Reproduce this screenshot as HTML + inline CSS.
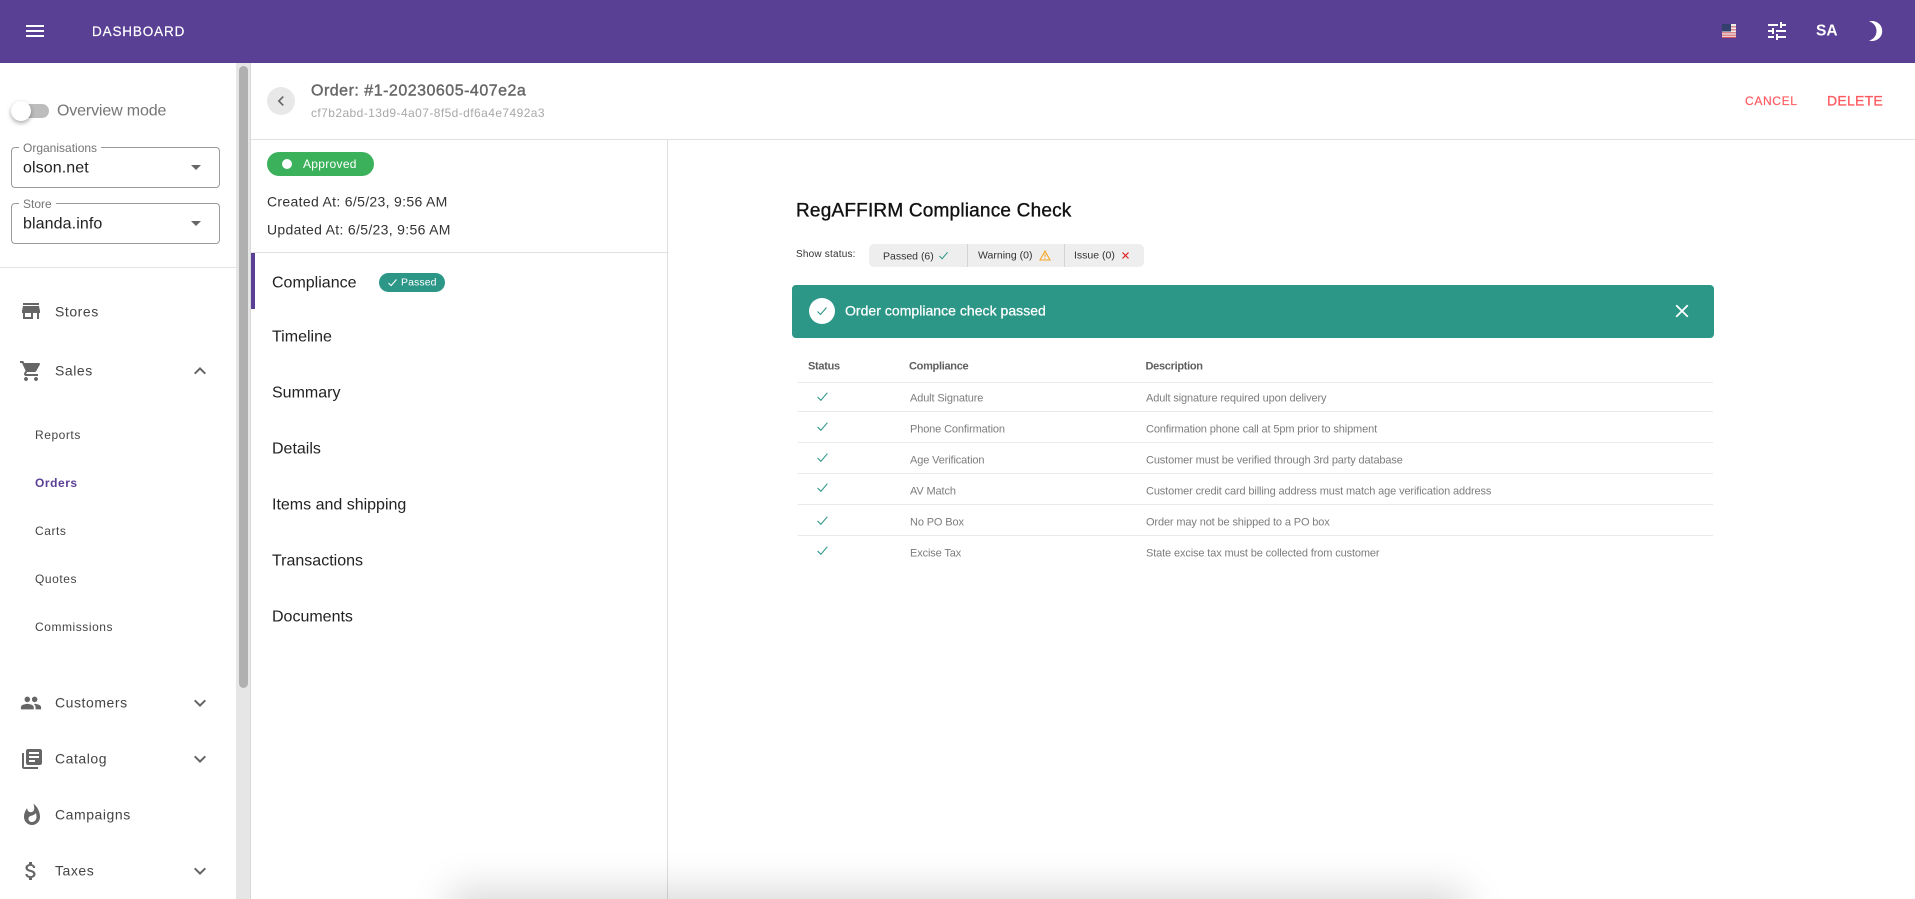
<!DOCTYPE html>
<html>
<head>
<meta charset="utf-8">
<style>
html,body{margin:0;padding:0;width:1915px;height:899px;overflow:hidden;background:#fff;font-family:"Liberation Sans",sans-serif;}
#root{position:relative;width:1915px;height:899px;overflow:hidden;}
.a{position:absolute;}
.t{position:absolute;white-space:nowrap;transform:translateY(-50%);line-height:1.2;}
svg{position:absolute;display:block;}
.side{font-size:14px;color:#444;letter-spacing:.55px;left:55px;}
.sub{font-size:12px;color:#444;letter-spacing:.55px;}
.menu{font-size:16px;color:#222;left:272px;}
.cell{font-size:11px;color:#7d7d7d;letter-spacing:-.13px;}
.th{font-size:11px;color:#5f5f5f;font-weight:bold;letter-spacing:-.3px;}
.line{position:absolute;left:798px;width:915px;height:1px;background:#e9e9e9;}
</style>
</head>
<body>
<div id="root">
<!-- header -->
<div class="a" style="left:0;top:0;width:1915px;height:63px;background:#5a4095;"></div>
<svg style="left:23px;top:19px" width="24" height="24" viewBox="0 0 24 24"><path fill="#fff" d="M3 18h18v-2H3v2zm0-5h18v-2H3v2zm0-7v2h18V6H3z"/></svg>
<div class="t" style="left:92px;top:31.5px;font-size:13.5px;color:#fff;letter-spacing:.85px;-webkit-text-stroke:.2px #fff;">DASHBOARD</div>
<svg style="left:1722px;top:24px" width="14" height="14" viewBox="0 0 14 14"><rect width="14" height="14" fill="#eee"/><rect y="2" width="14" height="1.5" fill="#d9878d"/><rect y="5" width="14" height="1.5" fill="#d9878d"/><rect y="8" width="14" height="1.5" fill="#d9878d"/><rect y="10.5" width="14" height="1.5" fill="#d9878d"/><rect y="12.8" width="14" height="1.2" fill="#d9505a"/><rect width="9" height="7.5" fill="#33406e"/></svg>
<svg style="left:1765px;top:19px" width="24" height="24" viewBox="0 0 24 24"><path fill="#fff" d="M3 17v2h6v-2H3zM3 5v2h10V5H3zm10 16v-2h8v-2h-8v-2h-2v6h2zM7 9v2H3v2h4v2h2V9H7zm14 4v-2H11v2h10zm-6-4h2V7h4V5h-4V3h-2v6z"/></svg>
<div class="t" style="left:1816px;top:32px;font-size:15.5px;font-weight:bold;color:#fff;">SA</div>
<svg style="left:1865px;top:18px" width="22" height="26" viewBox="0 0 22 26"><path fill="#fff" d="M4 3.2C11 2 17.2 6 17.2 13S11 24 4 22.8C9 21 11.5 17.5 11.5 13S9 5 4 3.2z"/></svg>

<!-- sidebar -->
<div class="a" style="left:236px;top:63px;width:14px;height:836px;background:#e6e6e6;"></div>
<div class="a" style="left:250px;top:63px;width:1px;height:836px;background:#d8d8d8;"></div>
<div class="a" style="left:239px;top:66px;width:9px;height:622px;background:#b0b0b0;border-radius:5px;"></div>

<div class="a" style="left:17px;top:104px;width:32px;height:14px;background:#bdbdbd;border-radius:7px;"></div>
<div class="a" style="left:11px;top:101px;width:20px;height:20px;background:#fff;border-radius:50%;box-shadow:0 2px 5px rgba(0,0,0,.35);"></div>
<div class="t" style="left:57px;top:110.5px;font-size:16px;color:#757575;letter-spacing:-.15px;">Overview mode</div>

<div class="a" style="left:11px;top:147px;width:207px;height:38.5px;border:1px solid #9a9a9a;border-radius:4px;"></div>
<div class="t" style="left:19px;top:148px;font-size:12px;color:#757575;background:#fff;padding:0 4px;">Organisations</div>
<div class="t" style="left:23px;top:167.5px;font-size:16px;color:#222;letter-spacing:.1px;">olson.net</div>
<div class="a" style="left:191px;top:165px;width:0;height:0;border-left:5px solid transparent;border-right:5px solid transparent;border-top:5px solid #666;"></div>

<div class="a" style="left:11px;top:203px;width:207px;height:38.5px;border:1px solid #9a9a9a;border-radius:4px;"></div>
<div class="t" style="left:19px;top:204px;font-size:12px;color:#757575;background:#fff;padding:0 4px;">Store</div>
<div class="t" style="left:23px;top:223.5px;font-size:16px;color:#222;letter-spacing:.1px;">blanda.info</div>
<div class="a" style="left:191px;top:221px;width:0;height:0;border-left:5px solid transparent;border-right:5px solid transparent;border-top:5px solid #666;"></div>

<div class="a" style="left:0;top:267px;width:236px;height:1px;background:#e2e2e2;"></div>

<svg style="left:19px;top:299px" width="24" height="24" viewBox="0 0 24 24"><path fill="#666" d="M20 4H4v2h16V4zm1 10v-2l-1-5H4l-1 5v2h1v6h10v-6h4v6h2v-6h1zm-9 4H6v-4h6v4z"/></svg>
<div class="t side" style="top:311.5px;">Stores</div>
<svg style="left:19px;top:359px" width="24" height="24" viewBox="0 0 24 24"><path fill="#666" d="M7 18c-1.1 0-1.99.9-1.99 2S5.9 22 7 22s2-.9 2-2-.9-2-2-2zM1 2v2h2l3.6 7.59-1.35 2.45c-.16.28-.25.61-.25.96 0 1.1.9 2 2 2h12v-2H7.42c-.14 0-.25-.11-.25-.25l.03-.12.9-1.63h7.45c.75 0 1.41-.41 1.75-1.03l3.58-6.49c.08-.14.12-.31.12-.48 0-.55-.45-1-1-1H5.21l-.94-2H1zm16 16c-1.1 0-1.99.9-1.99 2s.89 2 1.99 2 2-.9 2-2-.9-2-2-2z"/></svg>
<div class="t side" style="top:371px;">Sales</div>
<svg style="left:188px;top:359px" width="24" height="24" viewBox="0 0 24 24"><path fill="#666" d="M12 8l-6 6 1.41 1.41L12 10.83l4.59 4.58L18 14z"/></svg>

<div class="t sub" style="left:35px;top:435px;">Reports</div>
<div class="t sub" style="left:35px;top:483px;color:#5a4095;font-weight:bold;">Orders</div>
<div class="t sub" style="left:35px;top:531px;">Carts</div>
<div class="t sub" style="left:35px;top:579px;">Quotes</div>
<div class="t sub" style="left:35px;top:627px;">Commissions</div>

<svg style="left:20px;top:692px" width="22" height="22" viewBox="0 0 24 24"><path fill="#666" d="M16 11c1.66 0 2.99-1.34 2.99-3S17.66 5 16 5c-1.66 0-3 1.34-3 3s1.34 3 3 3zm-8 0c1.66 0 2.99-1.34 2.99-3S9.66 5 8 5C6.34 5 5 6.34 5 8s1.34 3 3 3zm0 2c-2.33 0-7 1.17-7 3.5V19h14v-2.5c0-2.33-4.67-3.5-7-3.5zm8 0c-.29 0-.62.02-.97.05 1.16.84 1.97 1.97 1.97 3.45V19h6v-2.5c0-2.33-4.67-3.5-7-3.5z"/></svg>
<div class="t side" style="top:703px;">Customers</div>
<svg style="left:188px;top:691px" width="24" height="24" viewBox="0 0 24 24"><path fill="#666" d="M16.59 8.59L12 13.17 7.41 8.59 6 10l6 6 6-6z"/></svg>

<svg style="left:19.5px;top:747px" width="24" height="24" viewBox="0 0 24 24"><path fill="#666" d="M4 6H2v14c0 1.1.9 2 2 2h14v-2H4V6zm16-4H8c-1.1 0-2 .9-2 2v12c0 1.1.9 2 2 2h12c1.1 0 2-.9 2-2V4c0-1.1-.9-2-2-2zm-1 9H9V9h10v2zm-4 4H9v-2h6v2zm4-8H9V5h10v2z"/></svg>
<div class="t side" style="top:759px;">Catalog</div>
<svg style="left:188px;top:747px" width="24" height="24" viewBox="0 0 24 24"><path fill="#666" d="M16.59 8.59L12 13.17 7.41 8.59 6 10l6 6 6-6z"/></svg>

<svg style="left:19.5px;top:803px" width="24" height="24" viewBox="0 0 24 24"><path fill="#666" d="M13.5.67s.74 2.65.74 4.8c0 2.06-1.35 3.73-3.41 3.73-2.07 0-3.63-1.67-3.63-3.73l.03-.36C5.21 7.51 4 10.62 4 14c0 4.42 3.58 8 8 8s8-3.58 8-8C20 8.61 17.41 3.8 13.5.67zM11.71 19c-1.78 0-3.22-1.4-3.22-3.14 0-1.62 1.05-2.76 2.81-3.12 1.77-.36 3.6-1.21 4.62-2.58.39 1.29.59 2.65.59 4.04 0 2.65-2.15 4.8-4.8 4.8z"/></svg>
<div class="t side" style="top:815px;">Campaigns</div>

<svg style="left:19px;top:859px" width="24" height="24" viewBox="0 0 24 24"><path fill="#666" d="M11.8 10.9c-2.27-.59-3-1.2-3-2.15 0-1.09 1.01-1.85 2.7-1.85 1.78 0 2.44.85 2.5 2.1h2.21c-.07-1.72-1.12-3.3-3.21-3.81V3h-3v2.16c-1.94.42-3.5 1.68-3.5 3.61 0 2.31 1.91 3.46 4.7 4.13 2.5.6 3 1.48 3 2.41 0 .69-.49 1.79-2.7 1.79-2.06 0-2.87-.92-2.98-2.1h-2.2c.12 2.19 1.76 3.42 3.68 3.83V21h3v-2.15c1.95-.37 3.5-1.5 3.5-3.55 0-2.84-2.43-3.81-4.7-4.4z"/></svg>
<div class="t side" style="top:871px;">Taxes</div>
<svg style="left:188px;top:859px" width="24" height="24" viewBox="0 0 24 24"><path fill="#666" d="M16.59 8.59L12 13.17 7.41 8.59 6 10l6 6 6-6z"/></svg>

<!-- order header -->
<div class="a" style="left:267px;top:87px;width:28px;height:28px;background:#e8e8e8;border-radius:50%;"></div>
<svg style="left:271px;top:91px" width="20" height="20" viewBox="0 0 24 24"><path fill="#666" d="M15.41 7.41L14 6l-6 6 6 6 1.41-1.41L10.83 12z"/></svg>
<div class="t" style="left:311px;top:91px;font-size:16px;color:#666;letter-spacing:.5px;-webkit-text-stroke:.4px #666;">Order: #1-20230605-407e2a</div>
<div class="t" style="left:311px;top:113px;font-size:12px;color:#a8a8a8;letter-spacing:.42px;">cf7b2abd-13d9-4a07-8f5d-df6a4e7492a3</div>
<div class="t" style="left:1745px;top:101px;font-size:12px;color:#ff5a60;letter-spacing:.65px;-webkit-text-stroke:.2px #ff5a60;">CANCEL</div>
<div class="t" style="left:1827px;top:101px;font-size:14px;color:#ff5a60;letter-spacing:.25px;-webkit-text-stroke:.3px #ff5a60;">DELETE</div>
<div class="a" style="left:251px;top:139px;width:1664px;height:1px;background:#e0e0e0;"></div>

<!-- left panel -->
<div class="a" style="left:667px;top:140px;width:1px;height:759px;background:#dedede;"></div>
<div class="a" style="left:267px;top:152px;width:107px;height:24px;background:#3cb15c;border-radius:12px;"></div>
<div class="a" style="left:282px;top:159px;width:10px;height:10px;background:#fff;border-radius:50%;"></div>
<div class="t" style="left:303px;top:163.5px;font-size:12px;color:#fff;letter-spacing:.3px;">Approved</div>
<div class="t" style="left:267px;top:202px;font-size:14px;color:#333;letter-spacing:.32px;">Created At: 6/5/23, 9:56 AM</div>
<div class="t" style="left:267px;top:230px;font-size:14px;color:#333;letter-spacing:.32px;">Updated At: 6/5/23, 9:56 AM</div>
<div class="a" style="left:251px;top:252px;width:416px;height:1px;background:#e0e0e0;"></div>
<div class="a" style="left:251px;top:253px;width:4px;height:56px;background:#5a4095;"></div>
<div class="t menu" style="top:283px;">Compliance</div>
<div class="a" style="left:379px;top:273px;width:66px;height:19px;background:#2c9687;border-radius:10px;"></div>
<svg style="left:386px;top:276px" width="13" height="13" viewBox="0 0 13 13"><path d="M2.5 7l2.6 2.6L10.5 3.5" fill="none" stroke="#fff" stroke-width="1.1"/></svg>
<div class="t" style="left:401px;top:283px;font-size:10.5px;color:#fff;letter-spacing:.1px;">Passed</div>
<div class="t menu" style="top:337px;">Timeline</div>
<div class="t menu" style="top:393px;">Summary</div>
<div class="t menu" style="top:449px;">Details</div>
<div class="t menu" style="top:505px;">Items and shipping</div>
<div class="t menu" style="top:561px;">Transactions</div>
<div class="t menu" style="top:617px;">Documents</div>

<!-- main -->
<div class="t" style="left:796px;top:212px;font-size:19px;color:#111;letter-spacing:.2px;-webkit-text-stroke:.35px #111;">RegAFFIRM Compliance Check</div>
<div class="t" style="left:796px;top:255px;font-size:10px;color:#333;letter-spacing:.2px;">Show status:</div>
<div class="a" style="left:869px;top:244px;width:275px;height:23px;background:#eee;border-radius:5px;"></div>
<div class="a" style="left:967px;top:244px;width:1px;height:23px;background:#d4d4d4;"></div>
<div class="a" style="left:1064px;top:244px;width:1px;height:23px;background:#d4d4d4;"></div>
<div class="t" style="left:883px;top:256.5px;font-size:10.5px;color:#333;">Passed (6)</div>
<svg style="left:938px;top:250px" width="11" height="11" viewBox="0 0 12 12"><path d="M1.5 6.5L4.5 9.5 10.5 2.5" fill="none" stroke="#2c9687" stroke-width="1.1"/></svg>
<div class="t" style="left:978px;top:256px;font-size:10.5px;color:#333;">Warning (0)</div>
<svg style="left:1039px;top:250px" width="12" height="11" viewBox="0 0 12 11"><path d="M6 1L11 10H1z M6 4v3 M6 8v1" fill="none" stroke="#f5a623" stroke-width="1.1"/></svg>
<div class="t" style="left:1074px;top:256px;font-size:10.5px;color:#333;">Issue (0)</div>
<svg style="left:1120.5px;top:251px" width="9" height="9" viewBox="0 0 9 9"><path d="M1.5 1.5L7.5 7.5M7.5 1.5L1.5 7.5" stroke="#e02020" stroke-width="1.2"/></svg>

<div class="a" style="left:792px;top:285px;width:921.5px;height:53px;background:#2c9687;border-radius:4px;"></div>
<div class="a" style="left:809px;top:298px;width:26px;height:26px;background:#fff;border-radius:50%;"></div>
<svg style="left:816px;top:305px" width="12" height="12" viewBox="0 0 12 12"><path d="M1.5 6.5L4.5 9.5 10.5 2.5" fill="none" stroke="#2c9687" stroke-width="1.1"/></svg>
<div class="t" style="left:845px;top:311px;font-size:14px;color:#fff;letter-spacing:.03px;-webkit-text-stroke:.25px #fff;">Order compliance check passed</div>
<svg style="left:1671px;top:300px" width="22" height="22" viewBox="0 0 24 24"><path fill="#fff" d="M19 6.41L17.59 5 12 10.59 6.41 5 5 6.41 10.59 12 5 17.59 6.41 19 12 13.41 17.59 19 19 17.59 13.41 12z"/></svg>

<!-- table -->
<div class="t th" style="left:808px;top:367px;">Status</div>
<div class="t th" style="left:909px;top:367px;">Compliance</div>
<div class="t th" style="left:1145.5px;top:367px;">Description</div>
<div class="line" style="top:382px;"></div>
<div class="line" style="top:411px;"></div>
<div class="line" style="top:442px;"></div>
<div class="line" style="top:473px;"></div>
<div class="line" style="top:504px;"></div>
<div class="line" style="top:535px;"></div>

<svg style="left:816px;top:390px" width="13" height="13" viewBox="0 0 12 12"><path d="M1.5 6.5L4.5 9.5 10.5 2.5" fill="none" stroke="#2c9687" stroke-width="1"/></svg>
<div class="t cell" style="left:910px;top:399px;">Adult Signature</div>
<div class="t cell" style="left:1146px;top:399px;">Adult signature required upon delivery</div>

<svg style="left:816px;top:420px" width="13" height="13" viewBox="0 0 12 12"><path d="M1.5 6.5L4.5 9.5 10.5 2.5" fill="none" stroke="#2c9687" stroke-width="1"/></svg>
<div class="t cell" style="left:910px;top:430px;">Phone Confirmation</div>
<div class="t cell" style="left:1146px;top:430px;">Confirmation phone call at 5pm prior to shipment</div>

<svg style="left:816px;top:451px" width="13" height="13" viewBox="0 0 12 12"><path d="M1.5 6.5L4.5 9.5 10.5 2.5" fill="none" stroke="#2c9687" stroke-width="1"/></svg>
<div class="t cell" style="left:910px;top:461px;">Age Verification</div>
<div class="t cell" style="left:1146px;top:461px;">Customer must be verified through 3rd party database</div>

<svg style="left:816px;top:481px" width="13" height="13" viewBox="0 0 12 12"><path d="M1.5 6.5L4.5 9.5 10.5 2.5" fill="none" stroke="#2c9687" stroke-width="1"/></svg>
<div class="t cell" style="left:910px;top:492px;">AV Match</div>
<div class="t cell" style="left:1146px;top:492px;">Customer credit card billing address must match age verification address</div>

<svg style="left:816px;top:514px" width="13" height="13" viewBox="0 0 12 12"><path d="M1.5 6.5L4.5 9.5 10.5 2.5" fill="none" stroke="#2c9687" stroke-width="1"/></svg>
<div class="t cell" style="left:910px;top:523px;">No PO Box</div>
<div class="t cell" style="left:1146px;top:523px;">Order may not be shipped to a PO box</div>

<svg style="left:816px;top:544px" width="13" height="13" viewBox="0 0 12 12"><path d="M1.5 6.5L4.5 9.5 10.5 2.5" fill="none" stroke="#2c9687" stroke-width="1"/></svg>
<div class="t cell" style="left:910px;top:554px;">Excise Tax</div>
<div class="t cell" style="left:1146px;top:554px;">State excise tax must be collected from customer</div>

<!-- bottom shadow -->
<div class="a" style="left:459px;top:899px;width:996px;height:40px;box-shadow:0 0 40px 10px rgba(0,0,0,.15);"></div>
</div>
</body>
</html>
